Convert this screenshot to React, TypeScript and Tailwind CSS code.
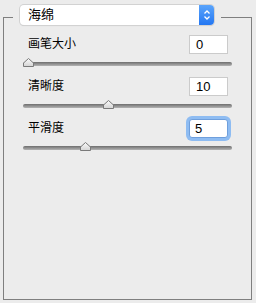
import React from 'react';

const ROWS = [
  { label: '画笔大小', value: '0', thumb: 0, focused: false },
  { label: '清晰度', value: '10', thumb: 80, focused: false },
  { label: '平滑度', value: '5', thumb: 57, focused: true },
];

const Thumb = () => (
  <svg width="11" height="9" viewBox="0 0 11 9" className="block">
    <defs>
      <linearGradient id="thumbFill" x1="0" y1="0" x2="0" y2="1">
        <stop offset="0" stopColor="#fbfbfb" />
        <stop offset="1" stopColor="#d4d4d4" />
      </linearGradient>
    </defs>
    <polygon points="0.5,8.5 0.5,5 5.5,0.5 10.5,5 10.5,8.5" fill="url(#thumbFill)" stroke="#7a7a7a" strokeWidth="1" />
  </svg>
);

const Slider = ({ left }: { left: number }) => (
  <div className="relative h-[10px] mt-[3px]">
    <div className="absolute left-0 right-0 top-[5px] h-[4px] rounded-full bg-gradient-to-b from-[#6e6e6e] to-[#b4b4b4]" />
    <div className="absolute top-[1px]" style={{ left }}>
      <Thumb />
    </div>
  </div>
);

const App: React.FC = () => {
  return (
    <div className="w-[256px] h-[303px] bg-[#ececec] pt-[5px] pl-[3px] pr-[4px]" style={{ fontFamily: '"Liberation Sans", "Noto Sans CJK SC", sans-serif' }}>
      <fieldset className="h-[295px] border border-[#7f7f7f] pl-[9px] pr-[19px] m-0">
        <legend className="px-[7px] h-[24px]">
          <div className="flex w-[194px] h-[20px] rounded-[4px] bg-white shadow-[0_0_0_1px_#d2d2d2,0_1px_1px_rgba(0,0,0,0.15)]">
            <div className="flex-1 pl-[8px] text-[13px] leading-[20px] text-black">海绵</div>
            <div className="w-[15px] h-[20px] rounded-r-[4px] bg-gradient-to-b from-[#5aa4fb] to-[#2377f2] flex items-center justify-center">
              <svg width="8" height="12" viewBox="0 0 8 12">
                <polyline points="1.5,4.5 4,2 6.5,4.5" fill="none" stroke="white" strokeWidth="1.3" />
                <polyline points="1.5,7.5 4,10 6.5,7.5" fill="none" stroke="white" strokeWidth="1.3" />
              </svg>
            </div>
          </div>
        </legend>
        <div className="pl-[10px] flex flex-col gap-[10px] pt-[6px]">
          {ROWS.map((row) => (
            <div key={row.label}>
              <div className="flex items-center justify-between pl-[5px] pr-[4px] h-[19px]">
                <span className="text-[12px] text-black leading-[19px]">{row.label}</span>
                {row.focused ? (
                  <div className="w-[39px] h-[19px] rounded-[3px] shadow-[0_0_0_3px_#8ebcf2] bg-white border border-[#6f9fdc] text-[13px] leading-[17px] pl-[5px] text-black">
                    {row.value}
                  </div>
                ) : (
                  <div className="w-[39px] h-[19px] bg-white border border-[#cbcbcb] text-[13px] leading-[17px] pl-[6px] text-black">
                    {row.value}
                  </div>
                )}
              </div>
              <Slider left={row.thumb} />
            </div>
          ))}
        </div>
      </fieldset>
    </div>
  );
};

export default App;
